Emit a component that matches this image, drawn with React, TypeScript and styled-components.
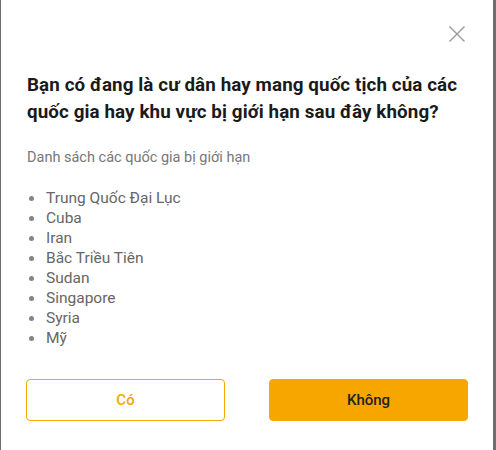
import styled, {createGlobalStyle} from "styled-components";

const GlobalStyle = createGlobalStyle`
    html, body {
        margin: 0;
        padding: 0;
        background-color: #6f6f6f;
    }
    * {
        box-sizing: border-box;
    }
`

const Backdrop = styled.div`
    width: 496px;
    height: 450px;
    padding: 0 3px 0 1px;
    overflow: hidden;
`

const Modal = styled.div`
    height: 450px;
    background-color: #ffffff;
    padding: 26px 25px 0 25px;
    display: flex;
    flex-direction: column;
    font-family: 'Roboto', 'Noto Sans', sans-serif;
`

const TopBar = styled.div`
    display: flex;
    justify-content: flex-end;
    padding-right: 3px;
`

const CloseButton = styled.button`
    width: 16px;
    height: 16px;
    padding: 0;
    margin: 0;
    border: none;
    background-color: transparent;
    cursor: pointer;
    display: block;
`

const Title = styled.h2`
    margin: 30px 0 0 1px;
    font-size: 18.8px;
    line-height: 27px;
    font-weight: 700;
    letter-spacing: 0.1px;
    color: #1a1a1a;
`

const Subtitle = styled.div`
    margin: 22px 0 0 1px;
    font-size: 14.5px;
    line-height: 20px;
    color: #777777;
`

const List = styled.ul`
    margin: 20px 0 0 0;
    padding: 0;
    list-style: none;
`

const Item = styled.li`
    display: flex;
    align-items: center;
    font-size: 15.5px;
    line-height: 20px;
    color: #666666;

    &::before {
        content: "";
        width: 5px;
        height: 5px;
        border-radius: 50%;
        background-color: #858585;
        margin: 0 12px 0 3px;
    }
`

const Actions = styled.div`
    display: flex;
    gap: 44px;
    margin-top: 31px;
`

const ActionButton = styled.button<{ $primary?: boolean }>`
    flex: 1;
    height: 42px;
    border-radius: 4px;
    border: 1px solid #f7a600;
    background-color: ${p => p.$primary ? '#f7a600' : '#ffffff'};
    color: ${p => p.$primary ? '#222222' : '#f7a600'};
    font-family: inherit;
    font-size: 15px;
    font-weight: 500;
    cursor: pointer;
`

const countries = [
    'Trung Quốc Đại Lục',
    'Cuba',
    'Iran',
    'Bắc Triều Tiên',
    'Sudan',
    'Singapore',
    'Syria',
    'Mỹ',
]

export default function App() {
    return (
        <>
            <GlobalStyle/>
            <Backdrop>
                <Modal>
                    <TopBar>
                        <CloseButton aria-label="close">
                            <svg width="16" height="16" viewBox="0 0 16 16">
                                <path d="M0.5 0.5 L15.5 15.5 M15.5 0.5 L0.5 15.5" stroke="#999" strokeWidth="1.4"/>
                            </svg>
                        </CloseButton>
                    </TopBar>
                    <Title>Bạn có đang là cư dân hay mang quốc tịch của các quốc gia hay khu vực bị giới hạn sau đây không?</Title>
                    <Subtitle>Danh sách các quốc gia bị giới hạn</Subtitle>
                    <List>
                        {countries.map(c => <Item key={c}>{c}</Item>)}
                    </List>
                    <Actions>
                        <ActionButton>Có</ActionButton>
                        <ActionButton $primary>Không</ActionButton>
                    </Actions>
                </Modal>
            </Backdrop>
        </>
    );
}
